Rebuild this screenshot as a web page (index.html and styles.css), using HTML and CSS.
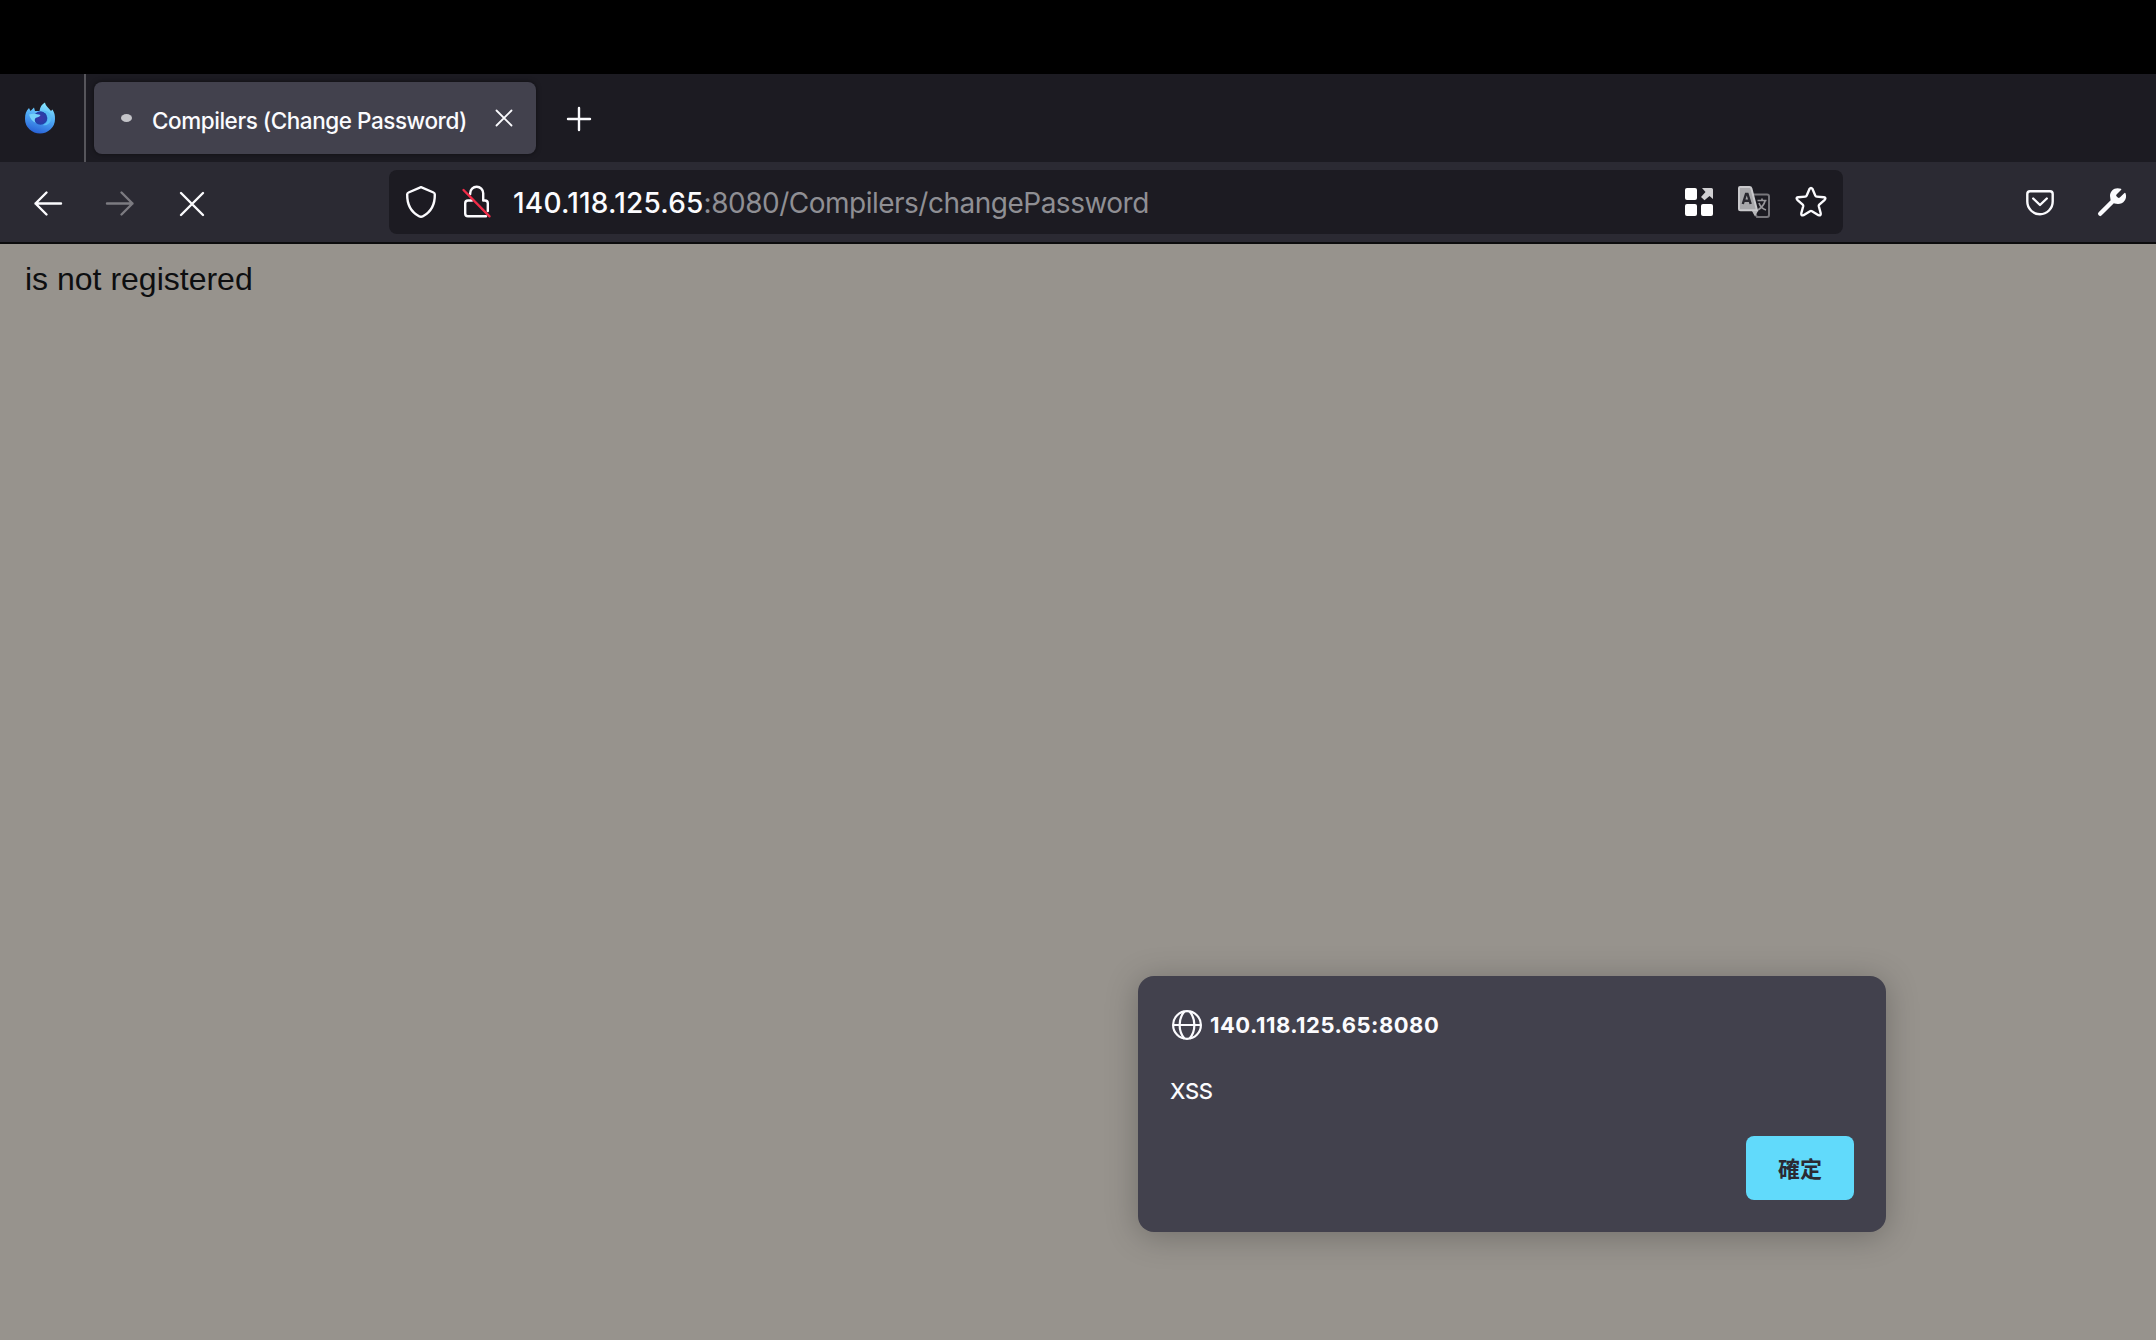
FILE: index.html
```
<!DOCTYPE html>
<html lang="zh-Hant">
<head>
  <meta charset="UTF-8">
  <title>Compilers (Change Password)</title>
  <link rel="stylesheet" href="styles.css">
</head>
<body>

  <div class="desktop-bar"></div>

  <div class="tabs">
    <div class="pinned">
      <svg width="30" height="32" viewBox="0 0 30 32">
        <defs>
          <linearGradient id="flame" x1="0.7" y1="0" x2="0.4" y2="1">
            <stop offset="0" stop-color="#8aebff"/>
            <stop offset="0.5" stop-color="#4ea9f5"/>
            <stop offset="1" stop-color="#2861d6"/>
          </linearGradient>
          <radialGradient id="core">
            <stop offset="0" stop-color="#3f36a8"/>
            <stop offset="1" stop-color="#2140a8"/>
          </radialGradient>
        </defs>
        <path fill="url(#flame)" d="M0 17C0 12 1 9 4 6L5.500 9L9 5.500L10 9L14.500 9C15 5 17 2 20 0.500C20.500 4 24 6 26 9L27.500 7.500C29.500 11 30 13 30 17A15 14.500 0 0 1 0 17Z"/>
        <circle cx="15.500" cy="16" r="6.800" fill="url(#core)"/>
        <path fill="#75d2fa" d="M4 12.500C8 11 12 12 15.500 13C15 15 12 15.500 10.500 16C9 18 10 20 11 21C7 19.500 5 16 4 12.500Z"/>
        <path fill="#58bdf5" d="M17 9C23 8 27 12 26 18C25 22 21 24 18 23C23 21 24 16 22 12Z"/>
      </svg>
    </div>
    <div class="tab">
      <span class="spinner"></span>
      <span class="tab-title">Compilers (Change Password)</span>
      <svg width="18" height="18" viewBox="0 0 18 18" class="line close">
        <path d="M1.500 1.500L16.500 16.500M16.500 1.500L1.500 16.500"/>
      </svg>
    </div>
    <svg width="24" height="24" viewBox="0 0 24 24" class="line new-tab">
      <path d="M12 1V23M1 12H23"/>
    </svg>
  </div>

  <div class="toolbar">
    <div class="nav">
      <svg width="28" height="26" viewBox="0 0 28 26" class="line">
        <path d="M12.500 1.500L1.500 12.500L12.500 23.500M1.500 12.500H27"/>
      </svg>
      <svg width="28" height="26" viewBox="0 0 28 26" class="line disabled">
        <path d="M15.500 1.500L26.500 12.500L15.500 23.500M26.500 12.500H1"/>
      </svg>
      <svg width="28" height="26" viewBox="0 0 28 26" class="line">
        <path d="M3 2L25 24M25 2L3 24"/>
      </svg>
    </div>

    <div class="urlbar">
      <svg width="30" height="32" viewBox="0 0 30 32" class="line shield">
        <path d="M15 1.200L27.500 6.500Q28.800 7 28.800 8.500C29 20 23 27 17 30.200Q15 31.300 13 30.200C7 27 1 20 1.200 8.500Q1.200 7 2.500 6.500Z"/>
      </svg>
      <svg width="30" height="34" viewBox="0 0 30 34" class="line lock">
        <path d="M8.200 9V8.200A6.500 6.500 0 0 1 21.200 8.200V15.500H23Q25.800 15.500 25.800 18.300V26M10 15.500H6Q3.200 15.500 3.200 18.300V28.500Q3.200 31.300 6 31.300H24"/>
        <path class="strike" d="M1.500 5L27.500 31.300"/>
      </svg>
      <span class="url"><b>140.118.125.65</b>:8080/Compilers/changePassword</span>
      <div class="url-actions">
        <svg width="28" height="28" viewBox="0 0 28 28" fill="#fff">
          <rect width="12" height="12" rx="2"/>
          <rect y="16" width="12" height="12" rx="2"/>
          <rect x="16" y="16" width="12" height="12" rx="2"/>
          <path fill="#d0d0d2" d="M17 0H26.500Q28 0 28 1.500V11L24.500 8L19.500 12.200L16 9L20.500 4Z"/>
        </svg>
        <svg width="32" height="32" viewBox="0 0 32 32">
          <path d="M15 8.500H29Q31 8.500 31 10.500V29Q31 31 29 31H19L15 24" fill="none" stroke="#77767b" stroke-width="2"/>
          <path d="M19.500 14.500H28.500M24 12.500V14.500M27 15C26 19 23 22 20 24M21 17C22 20 25 23 28 24" fill="none" stroke="#98979b" stroke-width="1.700"/>
          <path d="M2 1H11.500Q13 1 13.400 2.500L19 24.300H2.500Q1 24.300 1 22.800V2Q1 1 2 1Z" fill="#a7a7aa" stroke="#c9c9cc" stroke-width="2"/>
          <path d="M14 25H20L17 30.500Z" fill="#b7b7ba"/>
          <path d="M4.800 18L8 8H9.500L12.700 18M6 14.800H11.500" fill="none" stroke="#29282f" stroke-width="2.400"/>
        </svg>
        <svg width="32" height="32" viewBox="0 0 32 32" class="line star">
          <path d="M14.500 3Q16 0.700 17.500 3L20.300 9.600Q20.700 10.500 21.700 10.600L28.800 11.200Q31.500 11.700 29.700 13.800L24.300 18.600Q23.600 19.300 23.800 20.300L25.700 27.300Q26 30 23.500 29.200L17 25.200Q16 24.600 15 25.200L8.500 29.200Q6 30 6.300 27.300L8.200 20.300Q8.400 19.300 7.700 18.600L2.300 13.800Q0.500 11.700 3.200 11.200L10.300 10.600Q11.300 10.500 11.700 9.600Z"/>
        </svg>
      </div>
    </div>

    <div class="tools">
      <svg width="28" height="26" viewBox="0 0 28 26" class="line pocket">
        <path d="M4 1.300H24Q26.700 1.300 26.700 4V11.500A12.700 12.700 0 0 1 1.300 11.500V4Q1.300 1.300 4 1.300Z"/>
        <path d="M7.200 8.500L14 15L20.800 8.500"/>
      </svg>
      <svg width="28" height="28" viewBox="0 0 28 28">
        <path d="M2.200 25.800L15.500 12.500" stroke="#fbfbfe" stroke-width="4.400" stroke-linecap="round"/>
        <path fill="#fbfbfe" d="M23 0.800C17 -1.500 12 2.500 12 8Q12 16 20 16C25.500 16 29.500 11 27.600 5.500Q27.100 4.300 26.200 5.200L21.800 9.500Q20.800 10.300 19.800 9.600L18.500 8.300Q17.700 7.300 18.500 6.400L23 2Q23.900 1.200 23 0.800Z"/>
      </svg>
    </div>
  </div>

  <div class="page">
    <p>is not registered</p>

    <div class="dialog">
      <div class="dialog-title">
        <svg width="30" height="30" viewBox="0 0 30 30" class="globe">
          <circle cx="15" cy="15" r="13.900"/>
          <path d="M1 15H29M12.500 1.200C6 9 6 21 12.500 28.800M17.500 1.200C24 9 24 21 17.500 28.800"/>
        </svg>
        <span>140.118.125.65:8080</span>
      </div>
      <div class="dialog-text">XSS</div>
      <button>確定</button>
    </div>
  </div>

</body>
</html>
```
FILE: styles.css
```
* { box-sizing: border-box; }
body { margin: 0; height: 1340px; display: flex; flex-direction: column; overflow: hidden; font-family: Inter, "Noto Sans CJK TC", sans-serif; color: #fbfbfe; background: #97938d; }
svg { display: block; flex: none; overflow: visible; }
.line { fill: none; stroke: #fbfbfe; stroke-width: 2.4; stroke-linecap: round; stroke-linejoin: round; }

.desktop-bar { height: 74px; background: #000; }

.tabs { display: flex; align-items: center; height: 88px; background: #1c1b22; }
.pinned { width: 86px; height: 88px; padding: 28px 0 0 25px; border-right: 2px solid #56555b; }
.tab { display: flex; align-items: center; width: 442px; height: 72px; margin-left: 8px; padding: 0 23px 0 27px; border-radius: 8px; background: #42414d; box-shadow: 0 0 5px rgba(0, 0, 0, 0.5); }
.spinner { width: 11px; height: 8px; border-radius: 50%; background: #c4c4c9; }
.tab-title { flex: 1; margin-left: 20px; padding-top: 4px; font-size: 22.5px; font-weight: 500; letter-spacing: -0.45px; white-space: nowrap; }
.close { stroke-width: 1.8; }
.new-tab { margin: 2px 0 0 31px; }

.toolbar { display: flex; height: 82px; padding-top: 8px; background: #2b2a33; border-bottom: 2px solid #0c0c0d; }
.nav { display: flex; gap: 44px; width: 389px; padding: 21px 0 0 34px; }
.disabled { stroke: #7c7b81; }
.urlbar { display: flex; align-items: center; width: 1454px; height: 64px; padding: 0 16px 0 17px; border-radius: 8px; background: #1c1b22; }
.lock { margin-left: 26px; }
.strike { stroke: #f02c48; }
.url { flex: 1; margin-left: 21px; padding-top: 2px; font-size: 28px; letter-spacing: -0.5px; color: #8f8f94; white-space: nowrap; }
.url b { font-weight: 500; letter-spacing: 0.2px; color: #fbfbfe; }
.url-actions { display: flex; align-items: center; gap: 25px; }
.tools { display: flex; gap: 44px; padding: 18px 0 0 183px; }
.pocket { margin-top: 2px; }

.page { position: relative; flex: 1; padding: 16px 25px; color: #0d0e10; }
.page p { margin: 0; font: 32px/38px "Liberation Sans", Arial, sans-serif; }

.dialog { position: absolute; left: 1138px; top: 732px; display: flex; flex-direction: column; width: 748px; height: 256px; padding: 32px; border-radius: 16px; background: #42414d; color: #fbfbfe; font-size: 22px; box-shadow: 0 4px 32px rgba(0, 0, 0, 0.25); }
.dialog-title { display: flex; align-items: center; height: 34px; padding-left: 2px; font-weight: 700; letter-spacing: 0.5px; }
.dialog-title span { margin-left: 8px; }
.globe { fill: none; stroke: #fbfbfe; stroke-width: 2.2; }
.dialog-text { margin-top: 35px; line-height: 28px; font-weight: 500; letter-spacing: -0.3px; }
.dialog button { align-self: flex-end; width: 108px; height: 64px; margin-top: 31px; padding: 0 0 2px; border: 0; border-radius: 8px; background: #61dafb; color: #2b2a33; font: 700 22px "Noto Sans CJK TC", sans-serif; }
```
